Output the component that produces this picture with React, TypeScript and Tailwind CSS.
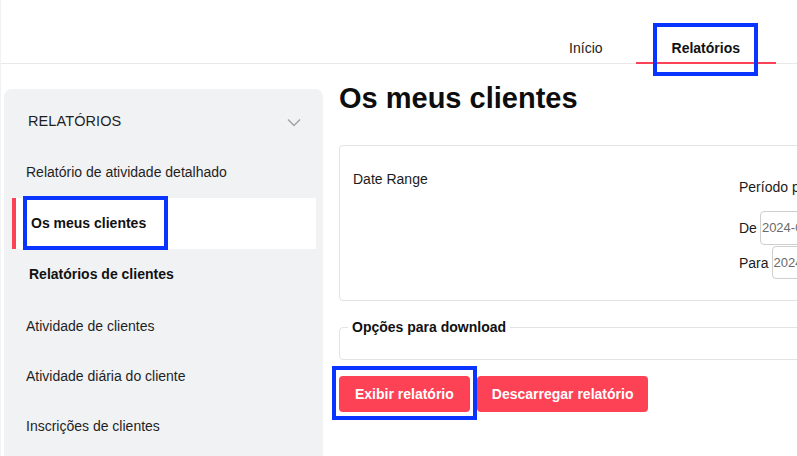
import React from "react";

const font = { fontFamily: '"Liberation Sans", Arial, Helvetica, sans-serif' };

function Chevron() {
  return (
    <svg width="14" height="9" viewBox="0 0 14 9" fill="none">
      <polyline points="1,1.5 7,7.5 13,1.5" stroke="#a3a3a3" strokeWidth="1.5" fill="none" />
    </svg>
  );
}

export default function App() {
  return (
    <div
      className="h-screen w-full overflow-hidden bg-white text-[#1b1b1b] border-l border-[#f2f2f2]"
      style={font}
    >
      {/* Header */}
      <header className="h-[64px] border-b border-[#e9e9e9] flex items-end justify-end pr-[21px] relative z-10">
        <div className="flex items-end -mb-px">
          <div className="pl-[36px] pr-[33px] pb-[4px] border-b-2 border-transparent text-[14px] leading-5 text-[#222]">
            Início
          </div>
          <div className="relative px-9 pb-[4px] border-b-2 border-[#fd4256] text-[14px] leading-5 font-bold text-[#111]">
            Relatórios
            <div className="absolute -top-[15px] -bottom-[14px] left-[17px] right-[18px] border-4 border-[#0a34ff] pointer-events-none" />
          </div>
        </div>
      </header>

      <div className="flex gap-4 pt-[25px] pl-[3px]">
        {/* Sidebar */}
        <aside className="w-[319px] shrink-0 h-[400px] bg-[#f1f2f4] rounded-t-lg pt-[8px] text-[14px] text-[#1f1f1f]">
          <div className="h-[50px] flex items-center justify-between pl-[24px] pr-[22px]">
            <span className="text-[14.5px] tracking-[0.1px]">RELATÓRIOS</span>
            <Chevron />
          </div>
          <div className="h-[51px] flex items-center pl-[22px]">Relatório de atividade detalhado</div>
          <div className="relative h-[51px] ml-[8px] mr-[7px] bg-white border-l-4 border-[#fd4256] flex items-center pl-[15px] text-[14px] font-bold text-[#111]">
            Os meus clientes
            <div className="absolute left-[7px] w-[145px] -top-[2px] -bottom-[1px] border-4 border-[#0a34ff] pointer-events-none" />
          </div>
          <div className="h-[50px] flex items-center pl-[25px] font-bold text-[#111]">Relatórios de clientes</div>
          <div className="h-[50px] mt-[2px] flex items-center pl-[22px]">Atividade de clientes</div>
          <div className="h-[50px] flex items-center pl-[22px]">Atividade diária do cliente</div>
          <div className="h-[51px] flex items-center pl-[22px]">Inscrições de clientes</div>
        </aside>

        {/* Main */}
        <main className="w-[600px] shrink-0">
          <h1 className="mt-[-7px] text-[29px] leading-[32px] font-bold text-[#0d0d0d]">Os meus clientes</h1>

          <div className="mt-[31px] border border-[#e3e3e3] rounded-[4px] pt-[23px] pb-[21px] pl-[13px] flex">
            <div className="w-[386px] shrink-0 text-[14px] leading-5">Date Range</div>
            <div className="pt-[8px] text-[14px] leading-5">
              <div className="whitespace-nowrap">Período personalizado</div>
              <div className="mt-[14px] flex items-center gap-[3px]">
                <span>De</span>
                <div className="h-[34px] w-[150px] border border-[#cfcfcf] rounded-[4px] flex items-center pl-[1px] text-[13px] text-[#6a6a6a]">
                  2024-05-01
                </div>
              </div>
              <div className="mt-[1px] flex items-center gap-[3px]">
                <span>Para</span>
                <div className="h-[33px] w-[150px] border border-[#cfcfcf] rounded-[4px] flex items-center pl-[1px] text-[13px] text-[#6a6a6a]">
                  2024-05-31
                </div>
              </div>
            </div>
          </div>

          <fieldset className="mt-4 border border-[#e3e3e3] rounded-[4px] pl-[8px] pb-[22px]">
            <legend className="px-[4px] text-[14px] leading-5 font-bold text-[#111]">Opções para download</legend>
          </fieldset>

          <div className="mt-4 flex gap-[7px]">
            <div className="relative">
              <button className="h-[36px] px-4 rounded-[4px] bg-[#fd4256] text-white text-[14px] font-bold">
                Exibir relatório
              </button>
              <div className="absolute -left-[7px] -right-[7px] -top-[10px] -bottom-[8px] border-4 border-[#0a34ff] pointer-events-none" />
            </div>
            <button className="h-[36px] px-[15px] rounded-[4px] bg-[#fd4256] text-white text-[14px] font-bold">
              Descarregar relatório
            </button>
          </div>
        </main>
      </div>
    </div>
  );
}
